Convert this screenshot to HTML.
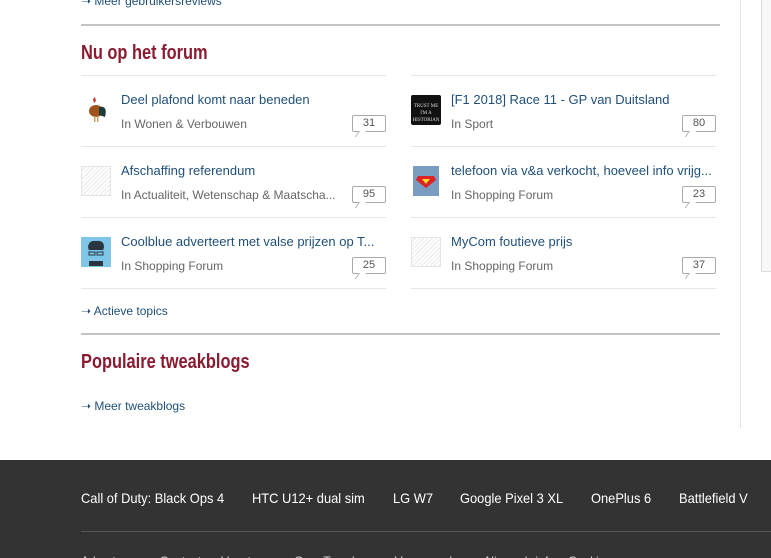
<!DOCTYPE html>
<html><head><meta charset="utf-8"><style>
*{margin:0;padding:0;box-sizing:border-box}
html,body{width:771px;height:558px;overflow:hidden}
body{background:#fff;font-family:"Liberation Sans",Arial,sans-serif;position:relative}
.a{position:absolute}
.link{color:#1f4f7a;font-size:12px}
h2{position:absolute;left:81px;color:#8a1b30;font-size:20px;font-weight:bold;transform:scaleX(0.82);transform-origin:left top;white-space:nowrap}
.rule{position:absolute;left:81px;width:639px;height:2px;background:#c4c4c4}
.sep{position:absolute;height:1px;background:#e6e6e6;width:305px}
.title{position:absolute;font-size:13px;color:#1f4f7a;white-space:nowrap}
.sub{position:absolute;font-size:12px;color:#666;white-space:nowrap}
.cnt{position:absolute;width:34px;height:17px;border:1px solid #aaa;border-radius:2px;font-size:11px;color:#555;text-align:center;line-height:15px;background:#fff}
.cnt:after{content:"";position:absolute;left:6px;bottom:-6px;width:6px;height:6px;border-left:1px solid #aaa;background:#fff;transform:skewX(-35deg);transform-origin:top left}
.th{position:absolute;width:30px;height:30px}
.hatch{border:1px solid #e4e4e4;background:repeating-linear-gradient(135deg,#fff 0 2px,#e8e8e8 2px 3px)}
.foot{position:absolute;top:460px;left:0;width:771px;height:98px;background:#333}
.fl{position:absolute;top:490px;color:#fff;font-size:14px;white-space:nowrap;transform:scaleX(0.92);transform-origin:left top}
</style></head><body>
<div class="a link" style="left:81px;top:-6px">➝ Meer gebruikersreviews</div>
<div class="rule" style="top:24px"></div>
<h2 style="top:42px">Nu op het forum</h2>

<div class="sep" style="left:81px;top:75px"></div><div class="sep" style="left:411px;top:75px"></div>
<div class="sep" style="left:81px;top:146px"></div><div class="sep" style="left:411px;top:146px"></div>
<div class="sep" style="left:81px;top:217px"></div><div class="sep" style="left:411px;top:217px"></div>
<div class="sep" style="left:81px;top:288px"></div><div class="sep" style="left:411px;top:288px"></div>

<div class="th" style="left:81px;top:95px"><svg width="30" height="30"><path d="M12 4 L14 2 L15 6 L13 8 Z" fill="#c0392b"/><ellipse cx="15" cy="16" rx="7" ry="6" fill="#a0521d"/><path d="M18 12 Q27 10 24 22 L18 20 Z" fill="#1d3b3a"/><rect x="13" y="21" width="1.5" height="6" fill="#c8a060"/><rect x="16" y="21" width="1.5" height="6" fill="#c8a060"/></svg></div>
<div class="title" style="left:121px;top:92px">Deel plafond komt naar beneden</div>
<div class="sub" style="left:121px;top:117px">In Wonen &amp; Verbouwen</div>
<div class="cnt" style="left:352px;top:115px">31</div>

<div class="th hatch" style="left:81px;top:166px"></div>
<div class="title" style="left:121px;top:163px">Afschaffing referendum</div>
<div class="sub" style="left:121px;top:188px">In Actualiteit, Wetenschap &amp; Maatscha...</div>
<div class="cnt" style="left:352px;top:186px">95</div>

<div class="th" style="left:81px;top:237px;background:#7fc6e8"><svg width="30" height="30"><path d="M7 10 Q8 3 15 4 Q23 3 23 10 L22 14 L8 14Z" fill="#2a3540"/><rect x="8" y="13" width="14" height="8" fill="#7fc6e8"/><rect x="8" y="15" width="6" height="3" fill="none" stroke="#2a3540"/><rect x="16" y="15" width="6" height="3" fill="none" stroke="#2a3540"/><rect x="8" y="24" width="14" height="5" fill="#2a3540"/></svg></div>
<div class="title" style="left:121px;top:234px">Coolblue adverteert met valse prijzen op T...</div>
<div class="sub" style="left:121px;top:259px">In Shopping Forum</div>
<div class="cnt" style="left:352px;top:257px">25</div>

<div class="th" style="left:411px;top:95px;background:#111;border-radius:2px;color:#ddd;font-family:'Liberation Serif',serif;font-size:5px;text-align:center;line-height:7px;padding-top:8px;overflow:hidden">TRUST ME I'M A<br>HISTORIAN</div>
<div class="title" style="left:451px;top:92px">[F1 2018] Race 11 - GP van Duitsland</div>
<div class="sub" style="left:451px;top:117px">In Sport</div>
<div class="cnt" style="left:682px;top:115px">80</div>

<div class="th" style="left:413px;top:166px;width:26px;background:#7a9cc0"><svg width="26" height="30"><path d="M5 10 L21 10 L23 14 L13 22 L3 14 Z" fill="#d22"/><path d="M9 13 L17 13 L13 18Z" fill="#fd3"/></svg></div>
<div class="title" style="left:451px;top:163px">telefoon via v&amp;a verkocht, hoeveel info vrijg...</div>
<div class="sub" style="left:451px;top:188px">In Shopping Forum</div>
<div class="cnt" style="left:682px;top:186px">23</div>

<div class="th hatch" style="left:411px;top:237px"></div>
<div class="title" style="left:451px;top:234px">MyCom foutieve prijs</div>
<div class="sub" style="left:451px;top:259px">In Shopping Forum</div>
<div class="cnt" style="left:682px;top:257px">37</div>

<div class="a link" style="left:81px;top:304px">➝ Actieve topics</div>
<div class="rule" style="top:333px"></div>
<h2 style="top:351px">Populaire tweakblogs</h2>
<div class="a link" style="left:81px;top:399px">➝ Meer tweakblogs</div>

<div class="a" style="left:740px;top:0;width:1px;height:428px;background:#e2e2e2"></div>
<div class="a" style="left:761px;top:0;width:10px;height:272px;background:#f8f8f8;border-left:1px solid #ddd;border-bottom:1px solid #ddd"></div>

<div class="foot"></div>
<div class="fl" style="left:81px">Call of Duty: Black Ops 4</div>
<div class="fl" style="left:252px">HTC U12+ dual sim</div>
<div class="fl" style="left:393px">LG W7</div>
<div class="fl" style="left:460px">Google Pixel 3 XL</div>
<div class="fl" style="left:591px">OnePlus 6</div>
<div class="fl" style="left:679px">Battlefield V</div>
<div class="a" style="left:81px;top:531px;width:690px;height:1px;background:#555"></div>
<div class="a" style="left:81px;top:554px;color:#ddd;font-size:12px;white-space:nowrap">Adverteren&nbsp;&nbsp;&nbsp;&nbsp;&nbsp;&nbsp;Contact&nbsp;&nbsp;&nbsp;&nbsp;&nbsp;&nbsp;Vacatures&nbsp;&nbsp;&nbsp;&nbsp;&nbsp;&nbsp;Over Tweakers&nbsp;&nbsp;&nbsp;&nbsp;&nbsp;&nbsp;Voorwaarden&nbsp;&nbsp;&nbsp;&nbsp;&nbsp;&nbsp;Nieuwsbrief&nbsp;&nbsp;&nbsp;&nbsp;&nbsp;&nbsp;Cookies</div>
</body></html>
